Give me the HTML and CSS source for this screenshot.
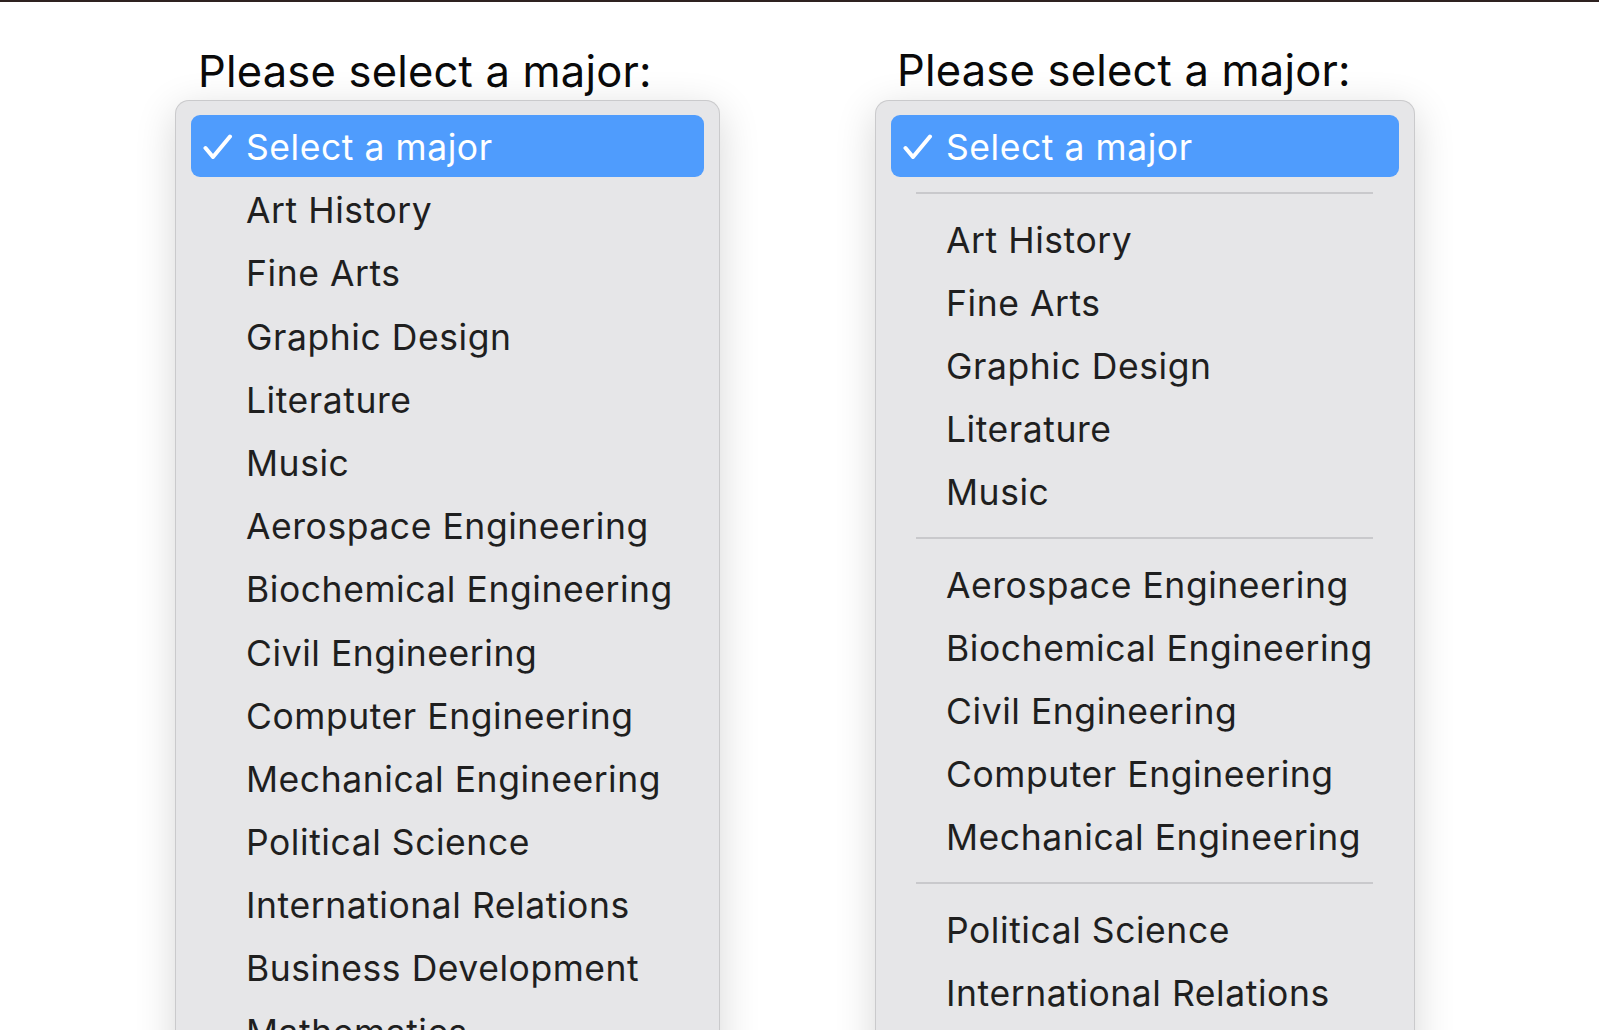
FILE: index.html
```html
<!DOCTYPE html>
<html lang="en">
<head>
<meta charset="utf-8">
<title>Please select a major</title>
<link rel="stylesheet" href="styles.css">
</head>
<body>
<div class="topline"></div>
<main class="page">
  <section class="column column-left">
    <h1 class="title">Please select a major:</h1>
    <div class="menu menu-left">
      <div class="item selected"><svg class="check" viewBox="0 0 30 26" width="30" height="26"><path d="M2.5 14 L10 23 L27 2.5" fill="none" stroke="#fff" stroke-width="4" stroke-linecap="round" stroke-linejoin="round"/></svg><span>Select a major</span></div>
      <div class="item">Art History</div>
      <div class="item">Fine Arts</div>
      <div class="item">Graphic Design</div>
      <div class="item">Literature</div>
      <div class="item">Music</div>
      <div class="item">Aerospace Engineering</div>
      <div class="item">Biochemical Engineering</div>
      <div class="item">Civil Engineering</div>
      <div class="item">Computer Engineering</div>
      <div class="item">Mechanical Engineering</div>
      <div class="item">Political Science</div>
      <div class="item">International Relations</div>
      <div class="item">Business Development</div>
      <div class="item">Mathematics</div>
      <div class="item">Economics</div>
    </div>
  </section>
  <section class="column column-right">
    <h1 class="title">Please select a major:</h1>
    <div class="menu menu-right">
      <div class="item selected"><svg class="check" viewBox="0 0 30 26" width="30" height="26"><path d="M2.5 14 L10 23 L27 2.5" fill="none" stroke="#fff" stroke-width="4" stroke-linecap="round" stroke-linejoin="round"/></svg><span>Select a major</span></div>
      <div class="sep"></div>
      <div class="item">Art History</div>
      <div class="item">Fine Arts</div>
      <div class="item">Graphic Design</div>
      <div class="item">Literature</div>
      <div class="item">Music</div>
      <div class="sep"></div>
      <div class="item">Aerospace Engineering</div>
      <div class="item">Biochemical Engineering</div>
      <div class="item">Civil Engineering</div>
      <div class="item">Computer Engineering</div>
      <div class="item">Mechanical Engineering</div>
      <div class="sep"></div>
      <div class="item">Political Science</div>
      <div class="item">International Relations</div>
      <div class="item">Business Development</div>
      <div class="item">Mathematics</div>
    </div>
  </section>
</main>
</body>
</html>
```

FILE: styles.css
```css
html, body {
  margin: 0;
  padding: 0;
  height: 1030px;
  overflow: hidden;
  background: #ffffff;
  font-family: Inter, "Liberation Sans", Arial, sans-serif;
}

.topline {
  height: 2px;
  background: #2e2220;
}

.page {
  display: flex;
  flex-direction: row;
  gap: 155px;
  padding-left: 175px;
  padding-top: 44px;
}

.column {
  display: flex;
  flex-direction: column;
}

.column-left { width: 545px; }
.column-right { width: 540px; }

.title {
  margin: 0 0 3px 0;
  font-size: 43.5px;
  font-weight: 400;
  line-height: 51px;
  color: #0a0a0a;
  padding-left: 23px;
  letter-spacing: 0.2px;
  white-space: nowrap;
}

.column-right .title {
  padding-left: 22px;
  margin-bottom: 4px;
  margin-top: -1px;
}

.menu {
  background: #e6e6e8;
  border: 1px solid #cacacc;
  border-bottom: none;
  border-radius: 14px 14px 0 0;
  padding: 14px 15px 0 15px;
  height: 1000px;
  box-shadow: 0 10px 40px rgba(0, 0, 0, 0.16);
  display: flex;
  flex-direction: column;
}

.item {
  box-sizing: border-box;
  height: 63.2px;
  padding-top: 3px;
  line-height: 60.2px;
  flex: none;
  padding-left: 55px;
  font-size: 35.5px;
  letter-spacing: 0.55px;
  color: #1f1f1f;
  white-space: nowrap;
  position: relative;
}

.menu-right .item {
  height: 63px;
  line-height: 60px;
}

.menu .item.selected {
  background: #4f9cfd;
  color: #ffffff;
  border-radius: 9px;
  height: 62px;
  line-height: 59px;
  margin-bottom: 1.2px;
}

.check {
  position: absolute;
  left: 12px;
  top: 19px;
}

.sep {
  flex: none;
  height: 2px;
  margin: 14px 26px 14px 25px;
  background: #c9c9cc;
}
```
